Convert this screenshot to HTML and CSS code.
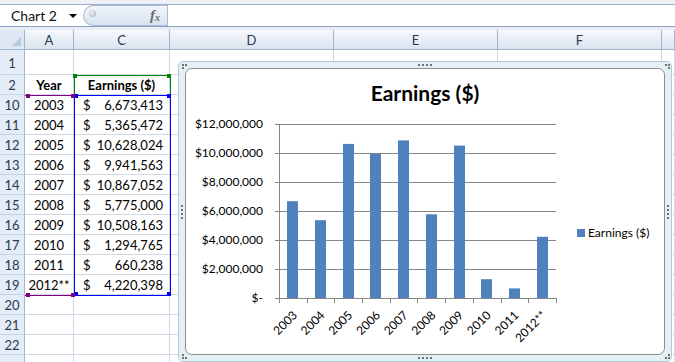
FILE: index.html
```html
<!DOCTYPE html>
<html lang="en">
<head>
    <meta charset="UTF-8">
    <title>Earnings chart - Book1</title>
    <link rel="stylesheet" href="styles.css">
</head>
<body>
<div class="app">

    <!-- formula bar -->
    <div class="topstrip"></div>
    <div class="formula-bar">
        <div class="name-box">
            <span>Chart 2</span>
            <span class="drop"></span>
        </div>
        <div class="fx-box">
            <span class="knob"></span>
            <span class="fx">f<sub>x</sub></span>
        </div>
        <div class="formula-input"></div>
    </div>
    <div class="bar-gap"></div>

    <!-- sheet grid -->
    <div class="sheet">
        <div class="row head">
            <div class="corner"><span class="tri"></span></div>
            <div class="ch">A</div><div class="ch">C</div><div class="ch">D</div>
            <div class="ch">E</div><div class="ch">F</div><div class="ch"></div>
        </div>
        <div class="row tall"><div class="rh">1</div><div></div><div></div><div></div><div></div><div></div><div></div></div>
        <div class="row"><div class="rh">2</div><div class="c bold">Year</div><div class="c bold">Earnings ($)</div><div></div><div></div><div></div><div></div></div>
        <div class="row"><div class="rh">10</div><div class="c">2003</div><div class="money"><span>$</span><span>6,673,413</span></div><div></div><div></div><div></div><div></div></div>
        <div class="row"><div class="rh">11</div><div class="c">2004</div><div class="money"><span>$</span><span>5,365,472</span></div><div></div><div></div><div></div><div></div></div>
        <div class="row"><div class="rh">12</div><div class="c">2005</div><div class="money"><span>$</span><span>10,628,024</span></div><div></div><div></div><div></div><div></div></div>
        <div class="row"><div class="rh">13</div><div class="c">2006</div><div class="money"><span>$</span><span>9,941,563</span></div><div></div><div></div><div></div><div></div></div>
        <div class="row"><div class="rh">14</div><div class="c">2007</div><div class="money"><span>$</span><span>10,867,052</span></div><div></div><div></div><div></div><div></div></div>
        <div class="row"><div class="rh">15</div><div class="c">2008</div><div class="money"><span>$</span><span>5,775,000</span></div><div></div><div></div><div></div><div></div></div>
        <div class="row"><div class="rh">16</div><div class="c">2009</div><div class="money"><span>$</span><span>10,508,163</span></div><div></div><div></div><div></div><div></div></div>
        <div class="row"><div class="rh">17</div><div class="c">2010</div><div class="money"><span>$</span><span>1,294,765</span></div><div></div><div></div><div></div><div></div></div>
        <div class="row"><div class="rh">18</div><div class="c">2011</div><div class="money"><span>$</span><span>660,238</span></div><div></div><div></div><div></div><div></div></div>
        <div class="row"><div class="rh">19</div><div class="c">2012**</div><div class="money"><span>$</span><span>4,220,398</span></div><div></div><div></div><div></div><div></div></div>
        <div class="row"><div class="rh">20</div><div></div><div></div><div></div><div></div><div></div><div></div></div>
        <div class="row"><div class="rh">21</div><div></div><div></div><div></div><div></div><div></div><div></div></div>
        <div class="row"><div class="rh">22</div><div></div><div></div><div></div><div></div><div></div><div></div></div>
        <div class="row"><div class="rh"></div><div></div><div></div><div></div><div></div><div></div><div></div></div>
    </div>

    <!-- source data highlights -->
    <div class="range series"></div>
    <div class="range values"></div>
    <div class="range cats"></div>
    <span class="handle green" style="left:73px;top:74px"></span>
    <span class="handle green" style="left:167px;top:74px"></span>
    <span class="handle blue" style="left:74px;top:94px"></span>
    <span class="handle blue" style="left:167px;top:94px"></span>
    <span class="handle blue" style="left:74px;top:292px"></span>
    <span class="handle blue" style="left:167px;top:292px"></span>
    <span class="handle purple" style="left:26px;top:94px"></span>
    <span class="handle purple" style="left:71px;top:94px"></span>
    <span class="handle purple" style="left:26px;top:293px"></span>
    <span class="handle purple" style="left:71px;top:293px"></span>

    <!-- embedded chart -->
    <div class="chart">
        <div class="chart-inner">
            <svg class="plot" width="478" height="285" viewBox="0 0 478 285">
                <g transform="translate(-186,-69)">
                    <text class="title" x="425" y="101">Earnings ($)</text>

                    <g class="grid">
                        <line x1="275" y1="124.5" x2="556" y2="124.5"/>
                        <line x1="275" y1="153.5" x2="556" y2="153.5"/>
                        <line x1="275" y1="182.5" x2="556" y2="182.5"/>
                        <line x1="275" y1="211.5" x2="556" y2="211.5"/>
                        <line x1="275" y1="240.5" x2="556" y2="240.5"/>
                        <line x1="275" y1="269.5" x2="556" y2="269.5"/>
                    </g>

                    <g class="ylabels">
                        <text x="263" y="128">$12,000,000</text>
                        <text x="263" y="157">$10,000,000</text>
                        <text x="263" y="186">$8,000,000</text>
                        <text x="263" y="215">$6,000,000</text>
                        <text x="263" y="244">$4,000,000</text>
                        <text x="263" y="273">$2,000,000</text>
                        <text x="263" y="302">$-</text>
                    </g>

                    <g class="bars">
                        <rect x="287" y="201.2" width="11" height="96.8"/>
                        <rect x="315" y="220.2" width="11" height="77.8"/>
                        <rect x="343" y="143.9" width="11" height="154.1"/>
                        <rect x="370" y="153.9" width="11" height="144.1"/>
                        <rect x="398" y="140.4" width="11" height="157.6"/>
                        <rect x="426" y="214.3" width="11" height="83.7"/>
                        <rect x="454" y="145.6" width="11" height="152.4"/>
                        <rect x="481" y="279.2" width="11" height="18.8"/>
                        <rect x="509" y="288.4" width="11" height="9.6"/>
                        <rect x="537" y="236.8" width="11" height="61.2"/>
                    </g>

                    <g class="axis">
                        <line x1="279.5" y1="124" x2="279.5" y2="298"/>
                        <line x1="275" y1="298.5" x2="557" y2="298.5"/>
                        <line x1="279.5" y1="298" x2="279.5" y2="303"/>
                        <line x1="307.5" y1="298" x2="307.5" y2="303"/>
                        <line x1="334.5" y1="298" x2="334.5" y2="303"/>
                        <line x1="362.5" y1="298" x2="362.5" y2="303"/>
                        <line x1="390.5" y1="298" x2="390.5" y2="303"/>
                        <line x1="417.5" y1="298" x2="417.5" y2="303"/>
                        <line x1="445.5" y1="298" x2="445.5" y2="303"/>
                        <line x1="473.5" y1="298" x2="473.5" y2="303"/>
                        <line x1="501.5" y1="298" x2="501.5" y2="303"/>
                        <line x1="528.5" y1="298" x2="528.5" y2="303"/>
                        <line x1="556.5" y1="298" x2="556.5" y2="303"/>
                    </g>

                    <g class="xlabels">
                        <text transform="translate(298,316) rotate(-45)">2003</text>
                        <text transform="translate(325.5,316) rotate(-45)">2004</text>
                        <text transform="translate(353.2,316) rotate(-45)">2005</text>
                        <text transform="translate(381,316) rotate(-45)">2006</text>
                        <text transform="translate(408.6,316) rotate(-45)">2007</text>
                        <text transform="translate(436.3,316) rotate(-45)">2008</text>
                        <text transform="translate(464,316) rotate(-45)">2009</text>
                        <text transform="translate(491.7,316) rotate(-45)">2010</text>
                        <text transform="translate(519.4,316) rotate(-45)">2011</text>
                        <text transform="translate(547.1,316) rotate(-45)">2012**</text>
                    </g>

                    <rect class="swatch" x="577" y="229" width="8" height="8"/>
                    <text class="legend" x="588" y="237">Earnings ($)</text>
                </g>
            </svg>
        </div>

        <!-- resize grips -->
        <svg class="grips" width="494" height="301" viewBox="0 0 494 301">
            <g transform="translate(-178,-61)">
                <rect x="182" y="64" width="2" height="2"/>
                <rect x="185" y="64" width="2" height="2"/>
                <rect x="182" y="67" width="2" height="2"/>

                <rect x="418" y="64" width="2" height="2"/>
                <rect x="422" y="64" width="2" height="2"/>
                <rect x="426" y="64" width="2" height="2"/>
                <rect x="430" y="64" width="2" height="2"/>

                <rect x="665" y="64" width="2" height="2"/>
                <rect x="668" y="64" width="2" height="2"/>
                <rect x="668" y="67" width="2" height="2"/>

                <rect x="181" y="205" width="2" height="2"/>
                <rect x="181" y="209" width="2" height="2"/>
                <rect x="181" y="213" width="2" height="2"/>
                <rect x="181" y="217" width="2" height="2"/>

                <rect x="667" y="205" width="2" height="2"/>
                <rect x="667" y="209" width="2" height="2"/>
                <rect x="667" y="213" width="2" height="2"/>
                <rect x="667" y="217" width="2" height="2"/>

                <rect x="182" y="357" width="2" height="2"/>
                <rect x="182" y="354" width="2" height="2"/>
                <rect x="185" y="357" width="2" height="2"/>

                <rect x="418" y="357" width="2" height="2"/>
                <rect x="422" y="357" width="2" height="2"/>
                <rect x="426" y="357" width="2" height="2"/>
                <rect x="430" y="357" width="2" height="2"/>

                <rect x="665" y="357" width="2" height="2"/>
                <rect x="668" y="357" width="2" height="2"/>
                <rect x="668" y="354" width="2" height="2"/>
            </g>
        </svg>
    </div>

</div>
</body>
</html>
```

FILE: styles.css
```css
/* General Styles */
body {
    margin: 0;
    padding: 0;
    font-family: 'Lato', 'Liberation Sans', sans-serif;
    font-size: 13px;
    color: #000;
    background-color: #fff;
    overflow: hidden;
}

.app {
    position: relative;
    width: 675px;
    height: 362px;
    overflow: hidden;
}

/* Formula bar */
.topstrip {
    height: 4px;
    background-color: #eef1f5;
    border-bottom: 1px solid #9aaec6;
}

.formula-bar {
    display: flex;
    height: 21px;
    background-color: #fff;
    border-bottom: 1px solid #87a2c2;
}

.name-box {
    display: flex;
    align-items: center;
    justify-content: space-between;
    width: 83px;
    padding: 0 6px 0 11px;
    box-sizing: border-box;
    font-size: 14px;
    color: #111;
}

.drop {
    width: 0;
    height: 0;
    border-left: 4px solid transparent;
    border-right: 4px solid transparent;
    border-top: 4px solid #000;
}

.fx-box {
    position: relative;
    display: flex;
    align-items: center;
    justify-content: space-between;
    width: 84px;
    padding: 0 7px 0 5px;
    box-sizing: border-box;
    border: 1px solid #a9bdd6;
    border-right: none;
    border-radius: 11px 0 0 11px;
    background: linear-gradient(to bottom, #f1f5fb, #d7e2f0);
}

.knob {
    width: 7px;
    height: 7px;
    border-radius: 50%;
    margin-top: -5px;
    background: radial-gradient(circle at 40% 40%, #f4f4f4, #a3a9b3);
}

.fx {
    font-family: 'Liberation Serif', serif;
    font-style: italic;
    font-weight: bold;
    font-size: 15px;
    color: #6c6c6c;
}

.fx sub {
    font-size: 10px;
    vertical-align: -1px;
}

.formula-input {
    flex: 1;
    border-left: 1px solid #a9bdd6;
}

.bar-gap {
    height: 3px;
    background-color: #e9eef6;
}

/* Sheet */
.row {
    display: grid;
    grid-template-columns: 25px 49px 96px 164px 164px 164px 1fr;
    height: 20px;
}

.row.tall {
    height: 25px;
}

.row > div {
    border-right: 1px solid #d0d7e5;
    border-bottom: 1px solid #d0d7e5;
    box-sizing: border-box;
    line-height: 21px;
    white-space: nowrap;
    overflow: hidden;
}

.row.tall > div {
    line-height: 27px;
}

.row.head > div {
    border-right: 1px solid #9eb6ce;
    border-bottom: 1px solid #9eb6ce;
    background: linear-gradient(to bottom, #f6f8fc, #dbe4f0);
    text-align: center;
    color: #2b3a4e;
}

.row.head > .corner {
    position: relative;
    background: #dfe7f2;
}

.tri {
    position: absolute;
    right: 3px;
    bottom: 3px;
    width: 0;
    height: 0;
    border-left: 9px solid transparent;
    border-bottom: 9px solid #b9c9dd;
}

.row > .rh {
    background-color: #e4ecf7;
    border-right: 1px solid #9eb6ce;
    border-bottom: 1px solid #c5d3e5;
    text-align: center;
    color: #2b3a4e;
}

.c {
    text-align: center;
}

.bold {
    font-weight: bold;
}

.row > .money {
    display: flex;
    justify-content: space-between;
    padding: 0 6px 0 9px;
}

/* Chart source highlights */
.range {
    position: absolute;
    box-sizing: border-box;
}

.range.series {
    left: 74px;
    top: 75px;
    width: 97px;
    height: 21px;
    border: 1px solid #008000;
}

.range.values {
    left: 74px;
    top: 95px;
    width: 97px;
    height: 201px;
    border: 1px solid #0000ff;
}

.range.cats {
    left: 25px;
    top: 95px;
    width: 49px;
    height: 201px;
    border-top: 1px solid #800080;
    border-bottom: 1px solid #800080;
}

.handle {
    position: absolute;
    width: 4px;
    height: 4px;
}

.handle.green { background-color: #008000; }
.handle.blue { background-color: #0000ff; }
.handle.purple { background-color: #800080; }

/* Chart */
.chart {
    position: absolute;
    left: 178px;
    top: 61px;
    width: 494px;
    height: 301px;
    padding: 6px;
    box-sizing: border-box;
    background-color: #e3f1f4;
    border: 1px solid #b3ccd2;
    border-radius: 5px;
}

.chart-inner {
    height: 100%;
    background-color: #fff;
    border: 1px solid #8e8e8e;
    border-radius: 7px;
    box-sizing: border-box;
    overflow: hidden;
}

.plot {
    display: block;
    font-family: 'Lato', 'Liberation Sans', sans-serif;
}

.grips {
    position: absolute;
    left: -1px;
    top: -1px;
    fill: #6f7378;
}

.title {
    font-size: 21px;
    font-weight: bold;
    text-anchor: middle;
    fill: #000;
}

.grid line,
.axis line {
    stroke: #868686;
    stroke-width: 1;
    shape-rendering: crispEdges;
}

.ylabels text {
    font-size: 12px;
    text-anchor: end;
    fill: #000;
}

.xlabels text {
    font-size: 12px;
    text-anchor: end;
    fill: #000;
}

.bars rect,
.swatch {
    fill: #4f81bd;
}

.legend {
    font-size: 12px;
    fill: #000;
}
```
